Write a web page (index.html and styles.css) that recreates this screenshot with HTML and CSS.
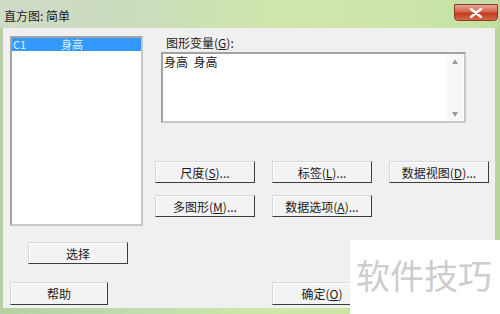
FILE: index.html
```html
<!doctype html>
<html lang="zh-CN">
    <head>
        <meta charset="UTF-8" />
        <title>直方图: 简单</title>
        <link rel="stylesheet" href="styles.css">
    </head>
    <body>
        <div class="window">
            <div class="titlebar">
                <span class="title">直方图: 简单</span>
                <button class="close" aria-label="关闭">
                    <svg width="14" height="10" viewBox="0 0 14 10">
                        <path d="M2 1 L12 9 M12 1 L2 9" stroke="#fff" stroke-width="2.4" stroke-linecap="round" />
                    </svg>
                </button>
            </div>

            <div class="client">
                <div class="listbox">
                    <div class="list-row selected">
                        <span class="col-id">C1</span>
                        <span>身高</span>
                    </div>
                </div>

                <div class="right-panel">
                    <div class="field-label">图形变量(<u>G</u>):</div>
                    <div class="vars">
                        <div class="vars-text">身高  身高</div>
                        <div class="scrollbar">
                            <span class="arrow">&#9650;</span>
                            <span class="arrow">&#9660;</span>
                        </div>
                    </div>

                    <div class="button-grid">
                        <button class="btn">尺度(<u>S</u>)...</button>
                        <button class="btn">标签(<u>L</u>)...</button>
                        <button class="btn">数据视图(<u>D</u>)...</button>
                        <button class="btn">多图形(<u>M</u>)...</button>
                        <button class="btn">数据选项(<u>A</u>)...</button>
                    </div>
                </div>

                <div class="select-cell">
                    <button class="btn">选择</button>
                </div>

                <div class="help-cell">
                    <button class="btn btn-help">帮助</button>
                </div>
                <div class="ok-cell">
                    <button class="btn btn-ok">确定(<u>O</u>)</button>
                </div>
            </div>
        </div>

        <!-- watermark pasted over the corner of the screenshot -->
        <div class="watermark">软件技巧</div>
    </body>
</html>
```

FILE: styles.css
```css
* {
    box-sizing: border-box;
}
body {
    margin: 0;
    width: 500px;
    height: 314px;
    overflow: hidden;
    position: relative;
    font-family: "Noto Sans CJK SC", "Noto Sans", sans-serif;
    font-size: 12px;
    color: #1a1a1a;
}
.window {
    height: 314px;
    padding: 0 5px 6px 3px;
    background: linear-gradient(90deg, #b6cfa4 0%, #c4dcae 30%, #cfe8a6 55%, #c9e3a4 80%, #b9d69c 100%);
    display: flex;
    flex-direction: column;
}
.titlebar {
    height: 28px;
    display: flex;
    align-items: flex-start;
    justify-content: space-between;
    margin: 0 -3px;
    padding-left: 4px;
    background: linear-gradient(90deg, rgba(215, 222, 210, 0.8) 0%, rgba(210, 225, 195, 0.3) 40%, rgba(220, 240, 180, 0.3) 100%);
}
.title {
    margin-top: 7px;
    font-size: 12px;
    color: #1c1c1c;
}
.close {
    margin-top: 4px;
    width: 44px;
    height: 17px;
    padding: 0;
    border: 1px solid #8a3a2c;
    border-radius: 0 0 4px 4px;
    background: linear-gradient(180deg, #e9a595 0%, #d5664d 45%, #c13a1f 55%, #d66a46 100%);
    display: flex;
    align-items: center;
    justify-content: center;
}
.client {
    flex: 1;
    background: #f0f0f0;
    padding: 8px 7px 0 7px;
    display: grid;
    grid-template-columns: 133px 1fr;
    grid-template-rows: 190px auto auto;
    column-gap: 12px;
}
.listbox {
    background: #fff;
    border: 2px solid #a2a2a2;
    border-right-color: #c6c6c6;
    border-bottom-color: #c6c6c6;
}
.list-row {
    height: 13px;
    line-height: 13px;
    font-size: 11px;
    display: flex;
    padding-left: 1px;
}
.list-row.selected {
    background: #3399ff;
    color: #e6f2ff;
}
.col-id {
    width: 48px;
}
.right-panel {
    display: flex;
    flex-direction: column;
}
.field-label {
    height: 16px;
    margin-left: 11px;
    line-height: 14px;
}
.field-label u,
.btn u {
    text-underline-offset: 1px;
}
.vars {
    margin-left: 6px;
    width: 305px;
    height: 71px;
    background: #fff;
    border: 2px solid #a2a2a2;
    border-right-color: #c8c8c8;
    border-bottom-color: #c8c8c8;
    display: flex;
}
.vars-text {
    flex: 1;
    padding: 1px 0 0 1px;
    line-height: 14px;
    white-space: pre;
}
.scrollbar {
    width: 16px;
    margin-right: 1px;
    background: #f7f7f7;
    display: flex;
    flex-direction: column;
    justify-content: space-between;
    align-items: center;
    padding: 4px 0 3px;
}
.arrow {
    font-size: 6px;
    color: #9a9a9a;
    line-height: 8px;
}
.button-grid {
    margin-top: 38px;
    display: grid;
    grid-template-columns: repeat(3, 100px);
    gap: 12px 17px;
}
.btn {
    height: 22px;
    width: 100px;
    padding: 0;
    font-family: inherit;
    font-size: 12px;
    color: #1a1a1a;
    background: #f3f3f3;
    border: 1px solid;
    border-color: #d8d8d8 #3c3c3c #3c3c3c #d8d8d8;
    box-shadow: inset 1px 1px #fff;
}
.select-cell {
    grid-column: 1 / -1;
    padding: 16px 0 0 18px;
}
.help-cell,
.ok-cell {
    padding-top: 15px;
}
.btn-help {
    width: 98px;
    height: 23px;
}
.btn-ok {
    margin-left: 117px;
    height: 23px;
}
.watermark {
    position: absolute;
    left: 350px;
    top: 240px;
    width: 150px;
    height: 74px;
    background: #fff;
    color: #cdcdcd;
    font-size: 34px;
    line-height: 34px;
    padding: 18px 0 0 6px;
}
```
